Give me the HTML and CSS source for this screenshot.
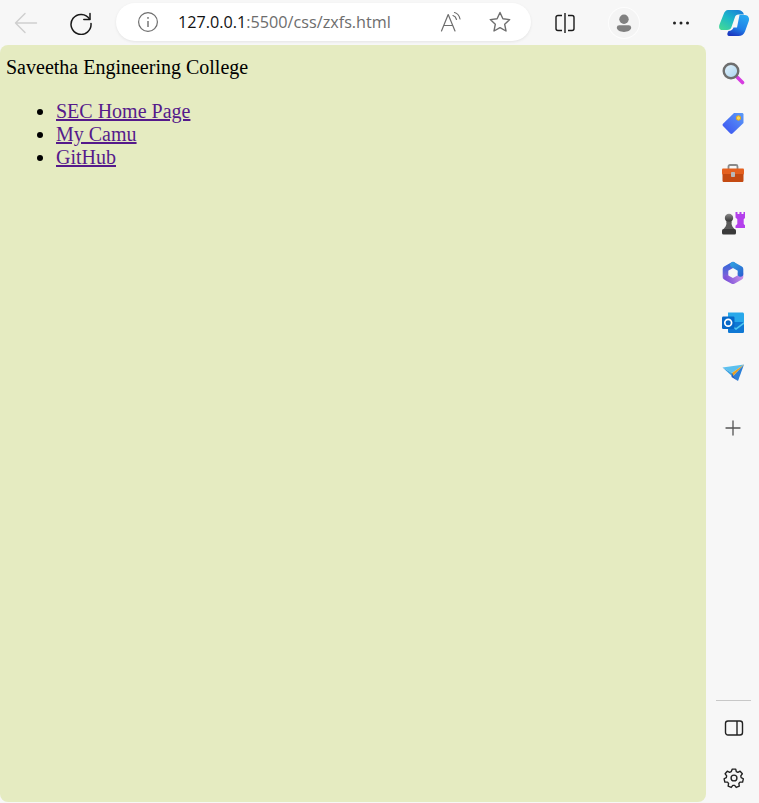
FILE: index.html
```html
<!DOCTYPE html>
<html lang="en">
<head>
<meta charset="utf-8">
<title>zxfs</title>
<link rel="stylesheet" href="styles.css">
</head>
<body>
<header class="toolbar">
  <button class="tool tool-back" aria-label="Back">
    <svg width="24" height="24" viewBox="0 0 24 24" fill="none" stroke="#cfcfcf" stroke-width="1.4" stroke-linecap="round" stroke-linejoin="round"><path d="M22.5 12H1.5M11 2.5 1.5 12l9.5 9.5"/></svg>
  </button>
  <button class="tool tool-reload" aria-label="Refresh">
    <svg width="24" height="24" viewBox="0 0 24 24" fill="none" stroke="#1a1a1a" stroke-width="1.5" stroke-linecap="round" stroke-linejoin="round"><path d="M20.6 8.2A10 10 0 1 0 22 12.4"/><path d="M21 2.4v6.2h-6.2"/></svg>
  </button>
  <div class="address">
    <svg class="info" width="22" height="22" viewBox="0 0 22 22" fill="none" stroke="#6e6e6e" stroke-width="1.2"><circle cx="11" cy="11" r="9.4"/><path d="M11 10v6" stroke-width="1.4"/><circle cx="11" cy="6.9" r=".9" fill="#6e6e6e" stroke="none"/></svg>
    <span class="url"><span class="host">127.0.0.1</span>:5500/css/zxfs.html</span>
    <svg class="read" width="22" height="22" viewBox="0 0 22 22" fill="none" stroke="#6e6e6e" stroke-width="1.2" stroke-linecap="round" stroke-linejoin="round"><path d="M1.500 20 8.200 3.500 15 20M4 14.500h8.500"/><path d="M13 4.500c1.800.6 3 2 3.500 4M14.500 1.500c2.700.8 4.800 3 5.500 6.500"/></svg>
    <svg class="star" width="24" height="24" viewBox="0 0 24 24" fill="none" stroke="#6e6e6e" stroke-width="1.4" stroke-linejoin="round"><path d="m12 2.500 2.900 6.300 6.800.8-5 4.700 1.300 6.700-6-3.400-6 3.400 1.300-6.700-5-4.700 6.800-.8z"/></svg>
  </div>
  <button class="tool tool-split" aria-label="Split screen">
    <svg width="22" height="22" viewBox="0 0 22 22" fill="none" stroke="#1a1a1a" stroke-width="1.4" stroke-linejoin="round"><path d="M8 3.500H4A2 2 0 0 0 2 5.500v11a2 2 0 0 0 2 2h4M14 3.500h4a2 2 0 0 1 2 2v11a2 2 0 0 1-2 2h-4M11 1v20"/></svg>
  </button>
  <div class="avatar" aria-label="Profile">
    <svg width="20" height="20" viewBox="0 0 20 20" fill="#808080"><circle cx="10" cy="6.200" r="4.700"/><path d="M2.800 14.500a2.500 2.500 0 0 1 2.500-2.300h9.400a2.500 2.500 0 0 1 2.500 2.300c0 2.700-3.300 4.400-7.200 4.400s-7.200-1.700-7.200-4.400z"/></svg>
  </div>
  <button class="tool tool-more" aria-label="More">
    <svg width="20" height="6" viewBox="0 0 20 6" fill="#222"><circle cx="3.500" cy="3" r="1.500"/><circle cx="10" cy="3" r="1.500"/><circle cx="16.500" cy="3" r="1.500"/></svg>
  </button>
  <div class="copilot" aria-label="Copilot">
    <svg width="32" height="28" viewBox="0 0 32 28">
      <defs>
        <linearGradient id="cpa" x1="0" y1="1" x2=".8" y2="0"><stop offset="0" stop-color="#48dc90"/><stop offset=".55" stop-color="#1cb8c8"/><stop offset="1" stop-color="#1a80d8"/></linearGradient>
        <linearGradient id="cpb" x1=".7" y1="0" x2=".3" y2="1"><stop offset="0" stop-color="#28a8f0"/><stop offset=".6" stop-color="#2080e8"/><stop offset="1" stop-color="#1c38c0"/></linearGradient>
      </defs>
      <path d="M10 1H20C23 1 25 2.500 26 5.500H20.500C18.500 5.500 17.500 6.500 17 8L13.500 18C13 20 11.500 21 9 21H4C1.500 21 .5 18.500 1.500 15.500L5.500 5.500C6.500 2.500 8 1 10 1Z" fill="url(#cpa)"/>
      <path d="M21.500 6H27C30 6 31.800 9 30.800 12L27 22.500C25.800 25.500 23.500 27 20.500 27H11C9.500 27 9 25.500 9.500 24L10.500 22C13 22 14.800 20.500 15.500 18.500H19Z" fill="url(#cpb)"/>
    </svg>
  </div>
</header>
<div class="frame">
  <main class="page">
    <p class="title">Saveetha Engineering College</p>
    <ul class="links">
      <li><a href="#sec">SEC Home Page</a></li>
      <li><a href="#camu">My Camu</a></li>
      <li><a href="#github">GitHub</a></li>
    </ul>
  </main>
  <aside class="sidebar">
    <div class="side-top">
      <div class="side-item">
        <svg width="24" height="24" viewBox="0 0 24 24"><defs><linearGradient id="lens" x1="0" y1="0" x2="1" y2="1"><stop offset="0" stop-color="#e4f2fb"/><stop offset="1" stop-color="#a8d4f0"/></linearGradient></defs><path d="m15 15 6.500 6.500" stroke="#d63ce0" stroke-width="3.600" stroke-linecap="round"/><circle cx="10" cy="10" r="7.300" fill="url(#lens)" stroke="#6e6e6e" stroke-width="2.400"/></svg>
      </div>
      <div class="side-item">
        <svg width="24" height="24" viewBox="0 0 24 24"><defs><linearGradient id="tag" x1="0" y1="1" x2="1" y2="0"><stop offset="0" stop-color="#3a50f0"/><stop offset="1" stop-color="#5c9cf8"/></linearGradient></defs><path d="M13 2h8c1 0 1.500.6 1.500 1.500v8.500L11.500 22.500c-.7.600-1.500.6-2.200 0L2 15c-.6-.7-.6-1.500 0-2.200z" fill="url(#tag)"/><circle cx="17.500" cy="7" r="2.200" fill="#f5d95a" stroke="#e8a820"/></svg>
      </div>
      <div class="side-item">
        <svg width="24" height="24" viewBox="0 0 24 24"><path d="M7.500 8V5.500c0-1 .6-1.500 1.500-1.500h6c1 0 1.500.5 1.500 1.500V8" fill="none" stroke="#8a8a8a" stroke-width="1.800"/><rect x="1" y="7.500" width="22" height="6" rx="1" fill="#e4601f"/><path d="M1.500 13h21v6.500c0 1-.6 1.500-1.500 1.500H3c-1 0-1.500-.5-1.500-1.500z" fill="#c44a12"/><rect x="10" y="11" width="4" height="5" rx=".8" fill="#b8b8b8"/></svg>
      </div>
      <div class="side-item">
        <svg width="24" height="24" viewBox="0 0 24 24"><defs><linearGradient id="pawn" x1="0" y1="0" x2="0" y2="1"><stop offset="0" stop-color="#8c8c8c"/><stop offset="1" stop-color="#2e2e2e"/></linearGradient></defs><path d="M14.500 1h2v2h2V1h2v2h2V1h2v5.500l-1.800 1.800V13l1.800 1.800v2.200h-10v-2.200l1.800-1.800V8.300l-1.800-1.800z" fill="#b440ec"/><circle cx="8" cy="7" r="4.200" fill="url(#pawn)"/><path d="M5 10.500h6l-.5 1.500c0 2.500 1.500 4.500 3 6H2.500c1.500-1.500 3-3.500 3-6z" fill="#5a5a5a"/><rect x="1" y="18" width="14" height="5.500" rx="1.500" fill="#3a3a3a"/></svg>
      </div>
      <div class="side-item">
        <svg width="24" height="24" viewBox="0 0 24 24" fill="none" stroke-width="5.600" stroke-linecap="round" stroke-linejoin="round"><defs><linearGradient id="m1" gradientUnits="userSpaceOnUse" x1="4" y1="4" x2="6" y2="20"><stop offset="0" stop-color="#3a66d8"/><stop offset="1" stop-color="#9a60dc"/></linearGradient><linearGradient id="m2" gradientUnits="userSpaceOnUse" x1="10" y1="2" x2="22" y2="15"><stop offset="0" stop-color="#30a0e0"/><stop offset="1" stop-color="#2a60d0"/></linearGradient><linearGradient id="m3" gradientUnits="userSpaceOnUse" x1="5" y1="20" x2="21" y2="14"><stop offset="0" stop-color="#7a50d8"/><stop offset="1" stop-color="#c890e8"/></linearGradient></defs><path d="M4.500 16V8L12 3.800" stroke="url(#m1)"/><path d="M6 17 12 20.200 19.500 16V13" stroke="url(#m3)"/><path d="M12 3.800 19.500 8v5" stroke="url(#m2)"/><circle cx="12" cy="12" r="3.800" fill="#f7f7f7" stroke="none"/></svg>
      </div>
      <div class="side-item">
        <svg width="24" height="24" viewBox="0 0 24 24"><path d="M7 1.500h14.500c.8 0 1.500.6 1.500 1.500v8H7z" fill="#28a8ea"/><path d="M7 11h16v9.500c0 1-.7 1.500-1.500 1.500h-13C7.700 22 7 21.500 7 20.500z" fill="#0f78d4"/><path d="m7 11 8 6 8-6v2l-8 6-8-6z" fill="#50c8f0"/><rect x="1" y="5.500" width="12.500" height="12.500" rx="1.200" fill="#0668c8"/><circle cx="7.200" cy="11.700" r="3.400" fill="none" stroke="#fff" stroke-width="1.700"/></svg>
      </div>
      <div class="side-item">
        <svg width="24" height="24" viewBox="0 0 24 24"><path d="M1.500 6.500 23 3.500 11 12z" fill="#5cc0ee"/><path d="M23 3.500 17 20 12 15z" fill="#2c80d8"/><path d="M23 3.500 11 12v4.500l2-2.500z" fill="#e8a020"/><path d="M1.500 6.500 11 12l1 4z" fill="#3aa0e0"/><path d="m11 12 1.500 3L17 20l-6.500-4z" fill="#2060c0"/></svg>
      </div>
      <div class="side-item side-add">
        <svg width="18" height="18" viewBox="0 0 18 18" stroke="#555" stroke-width="1.300" stroke-linecap="round"><path d="M9 2v14M2 9h14"/></svg>
      </div>
    </div>
    <div class="side-bottom">
      <div class="side-item">
        <svg width="20" height="20" viewBox="0 0 20 20" fill="none" stroke="#222" stroke-width="1.400"><rect x="1.500" y="3" width="17" height="14" rx="2.500"/><path d="M13 3v14" stroke-width="1.400"/></svg>
      </div>
      <div class="side-item">
        <svg width="22" height="22" viewBox="0 0 24 24" fill="none" stroke="#222" stroke-width="1.500" stroke-linejoin="round"><circle cx="12" cy="12" r="3.200"/><path d="M10.100 2.300h3.800l.6 2.800 1.700.8 2.500-1.300 2.400 2.800-1.700 2.200.4 1.900 2.400 1.300-.8 3.600-2.900.1-1.200 1.500.5 2.800-3.400 1.500-1.700-2.300h-2l-1.700 2.300-3.400-1.500.5-2.800-1.200-1.500-2.900-.1-.8-3.600 2.400-1.300.4-1.900-1.700-2.200 2.400-2.800 2.500 1.300 1.700-.8z"/></svg>
      </div>
    </div>
  </aside>
</div>
</body>
</html>
```
FILE: styles.css
```css
* { box-sizing: border-box; }
html, body { height: 100%; }
body {
  margin: 0;
  display: flex;
  flex-direction: column;
  overflow: hidden;
  background: #f7f7f7;
  font-family: "Liberation Serif", serif;
}
button { border: 0; padding: 0; background: none; display: flex; align-items: center; justify-content: center; }

.toolbar {
  flex: none;
  height: 45px;
  display: flex;
  align-items: center;
  padding-left: 11px;
}
.tool { width: 30px; height: 30px; }
.tool-reload { margin-left: 25px; }
.address {
  width: 415px;
  height: 38px;
  margin-left: 20px;
  margin-top: -2px;
  padding-left: 21px;
  display: flex;
  align-items: center;
  background: #fff;
  border-radius: 19px;
  box-shadow: 0 1px 3px rgba(0,0,0,.08);
}
.url {
  margin-left: 19px;
  width: 250px;
  font: 16.2px "Open Sans", sans-serif;
  color: #6d6d6d;
  white-space: nowrap;
}
.host { color: #111; }
.read { margin-left: 12px; }
.star { margin-left: 26px; }
.tool-split { margin-left: 19px; }
.avatar {
  width: 30px;
  height: 30px;
  margin-left: 29px;
  border-radius: 50%;
  background: #f4f4f4;
  box-shadow: 0 0 0 1px #fdfdfd;
  display: flex;
  align-items: center;
  justify-content: center;
}
.tool-more { margin-left: 27px; }
.copilot { margin-left: 22px; display: flex; }

.frame { flex: 1; min-height: 0; display: flex; }
.page {
  width: 706px;
  margin-bottom: 1px;
  padding: 11px 6px;
  background: #e5ebc1;
  border-radius: 8px;
  font-size: 20px;
  line-height: 23px;
  color: #000;
}
.title { margin: 0; }
.links { margin: 21px 0 0; padding-left: 50px; }
.links a { color: #551a8b; }

.sidebar {
  flex: 1;
  display: flex;
  flex-direction: column;
  justify-content: space-between;
  align-items: center;
  padding: 3px 0 0;
}
.side-top, .side-bottom { display: flex; flex-direction: column; align-items: center; }
.side-item { width: 35px; height: 50px; display: flex; align-items: center; justify-content: center; }
.side-add { height: 60px; }
.side-bottom { width: 35px; margin-left: 2px; padding-top: 2px; border-top: 1px solid #c8c8c8; }
```
